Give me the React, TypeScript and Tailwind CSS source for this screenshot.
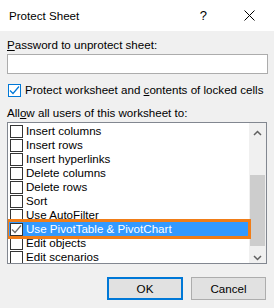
import React from 'react';

const ITEMS = [
  'Insert columns',
  'Insert rows',
  'Insert hyperlinks',
  'Delete columns',
  'Delete rows',
  'Sort',
  'Use AutoFilter',
  'Use PivotTable & PivotChart',
  'Edit objects',
  'Edit scenarios',
];

function Box({ checked, tone }: { checked?: boolean; tone?: 'blue' | 'gray' }) {
  const border = tone === 'blue' ? 'border-[#0078d7]' : 'border-[#333333]';
  const stroke = tone === 'blue' ? '#0078d7' : '#6b6b6b';
  return (
    <span className={`flex h-[13px] w-[13px] shrink-0 items-center justify-center border bg-white ${border}`}>
      {checked && (
        <svg width="11" height="11" viewBox="0 0 11 11">
          <path d="M1 5.5 L4 8.5 L10 1.5" fill="none" stroke={stroke} strokeWidth="1.2" />
        </svg>
      )}
    </span>
  );
}

export default function App() {
  return (
    <div
      className="relative h-[308px] w-[274px] overflow-hidden whitespace-nowrap bg-[#f0f0f0] text-[11.6px] text-black"
      style={{ fontFamily: '"Liberation Sans", Arial, sans-serif' }}
    >
      {/* title bar */}
      <div className="flex h-[31px] items-center bg-white pl-[9px]">
        <span className="flex-1 text-[11.6px]">Protect Sheet</span>
        <span className="mr-[37px] text-[13px]">?</span>
        <svg width="11" height="11" viewBox="0 0 11 11" className="mr-[19px]">
          <path d="M0.5 0.5 L10.5 10.5 M10.5 0.5 L0.5 10.5" stroke="#000" strokeWidth="1" />
        </svg>
      </div>

      <div className="px-[7px]">
        <div className="mt-[6px] h-[16px] leading-[16px]">
          <span className="underline">P</span>assword to unprotect sheet:
        </div>
        <div className="mt-[1px] h-[20px] w-[261px] border border-[#acacac] bg-white" />

        <div className="mt-[8px] flex h-[16px] items-center gap-[4px] pl-[1px]">
          <Box checked tone="blue" />
          <span>
            Protect worksheet and <span className="underline">c</span>ontents of locked cells
          </span>
        </div>

        <div className="mt-[7px] h-[16px] leading-[16px]">
          All<span className="underline">o</span>w all users of this worksheet to:
        </div>

        <div className="relative mt-[1px] h-[142px] w-[260px] overflow-hidden border border-[#828790] bg-white">
          <div className="pr-[17px] pt-[1px]">
            {ITEMS.map((item, i) => {
              const sel = i === 7;
              return (
                <div
                  key={item}
                  className={`flex h-[14px] items-center gap-[3px] pl-[2px] ${sel ? 'bg-[#3399ff] text-white' : ''}`}
                >
                  <Box checked={sel} />
                  <span>{item}</span>
                </div>
              );
            })}
          </div>

          {/* scrollbar */}
          <div className="absolute right-0 top-0 flex h-full w-[17px] flex-col items-center bg-[#f0f0f0]">
            <svg width="9" height="6" viewBox="0 0 9 6" className="mt-[7px]">
              <path d="M1 5 L4.5 1.5 L8 5" fill="none" stroke="#606060" strokeWidth="1.5" />
            </svg>
            <div className="mt-[39px] h-[71px] w-[15px] bg-[#cdcdcd]" />
            <svg width="9" height="6" viewBox="0 0 9 6" className="mt-[9px]">
              <path d="M1 1 L4.5 4.5 L8 1" fill="none" stroke="#606060" strokeWidth="1.5" />
            </svg>
          </div>

          {/* orange callout */}
          <div className="absolute left-[-2px] top-[96px] h-[20px] w-[245px] border-[3px] border-[#f07d18]" />
        </div>

        <div className="mt-[13px] flex justify-end gap-[8px] pr-[1px]">
          <button className="h-[23px] w-[76px] border-2 border-[#0078d7] bg-[#e1e1e1]">OK</button>
          <button className="h-[23px] w-[75px] border border-[#adadad] bg-[#e1e1e1]">Cancel</button>
        </div>
      </div>
    </div>
  );
}
